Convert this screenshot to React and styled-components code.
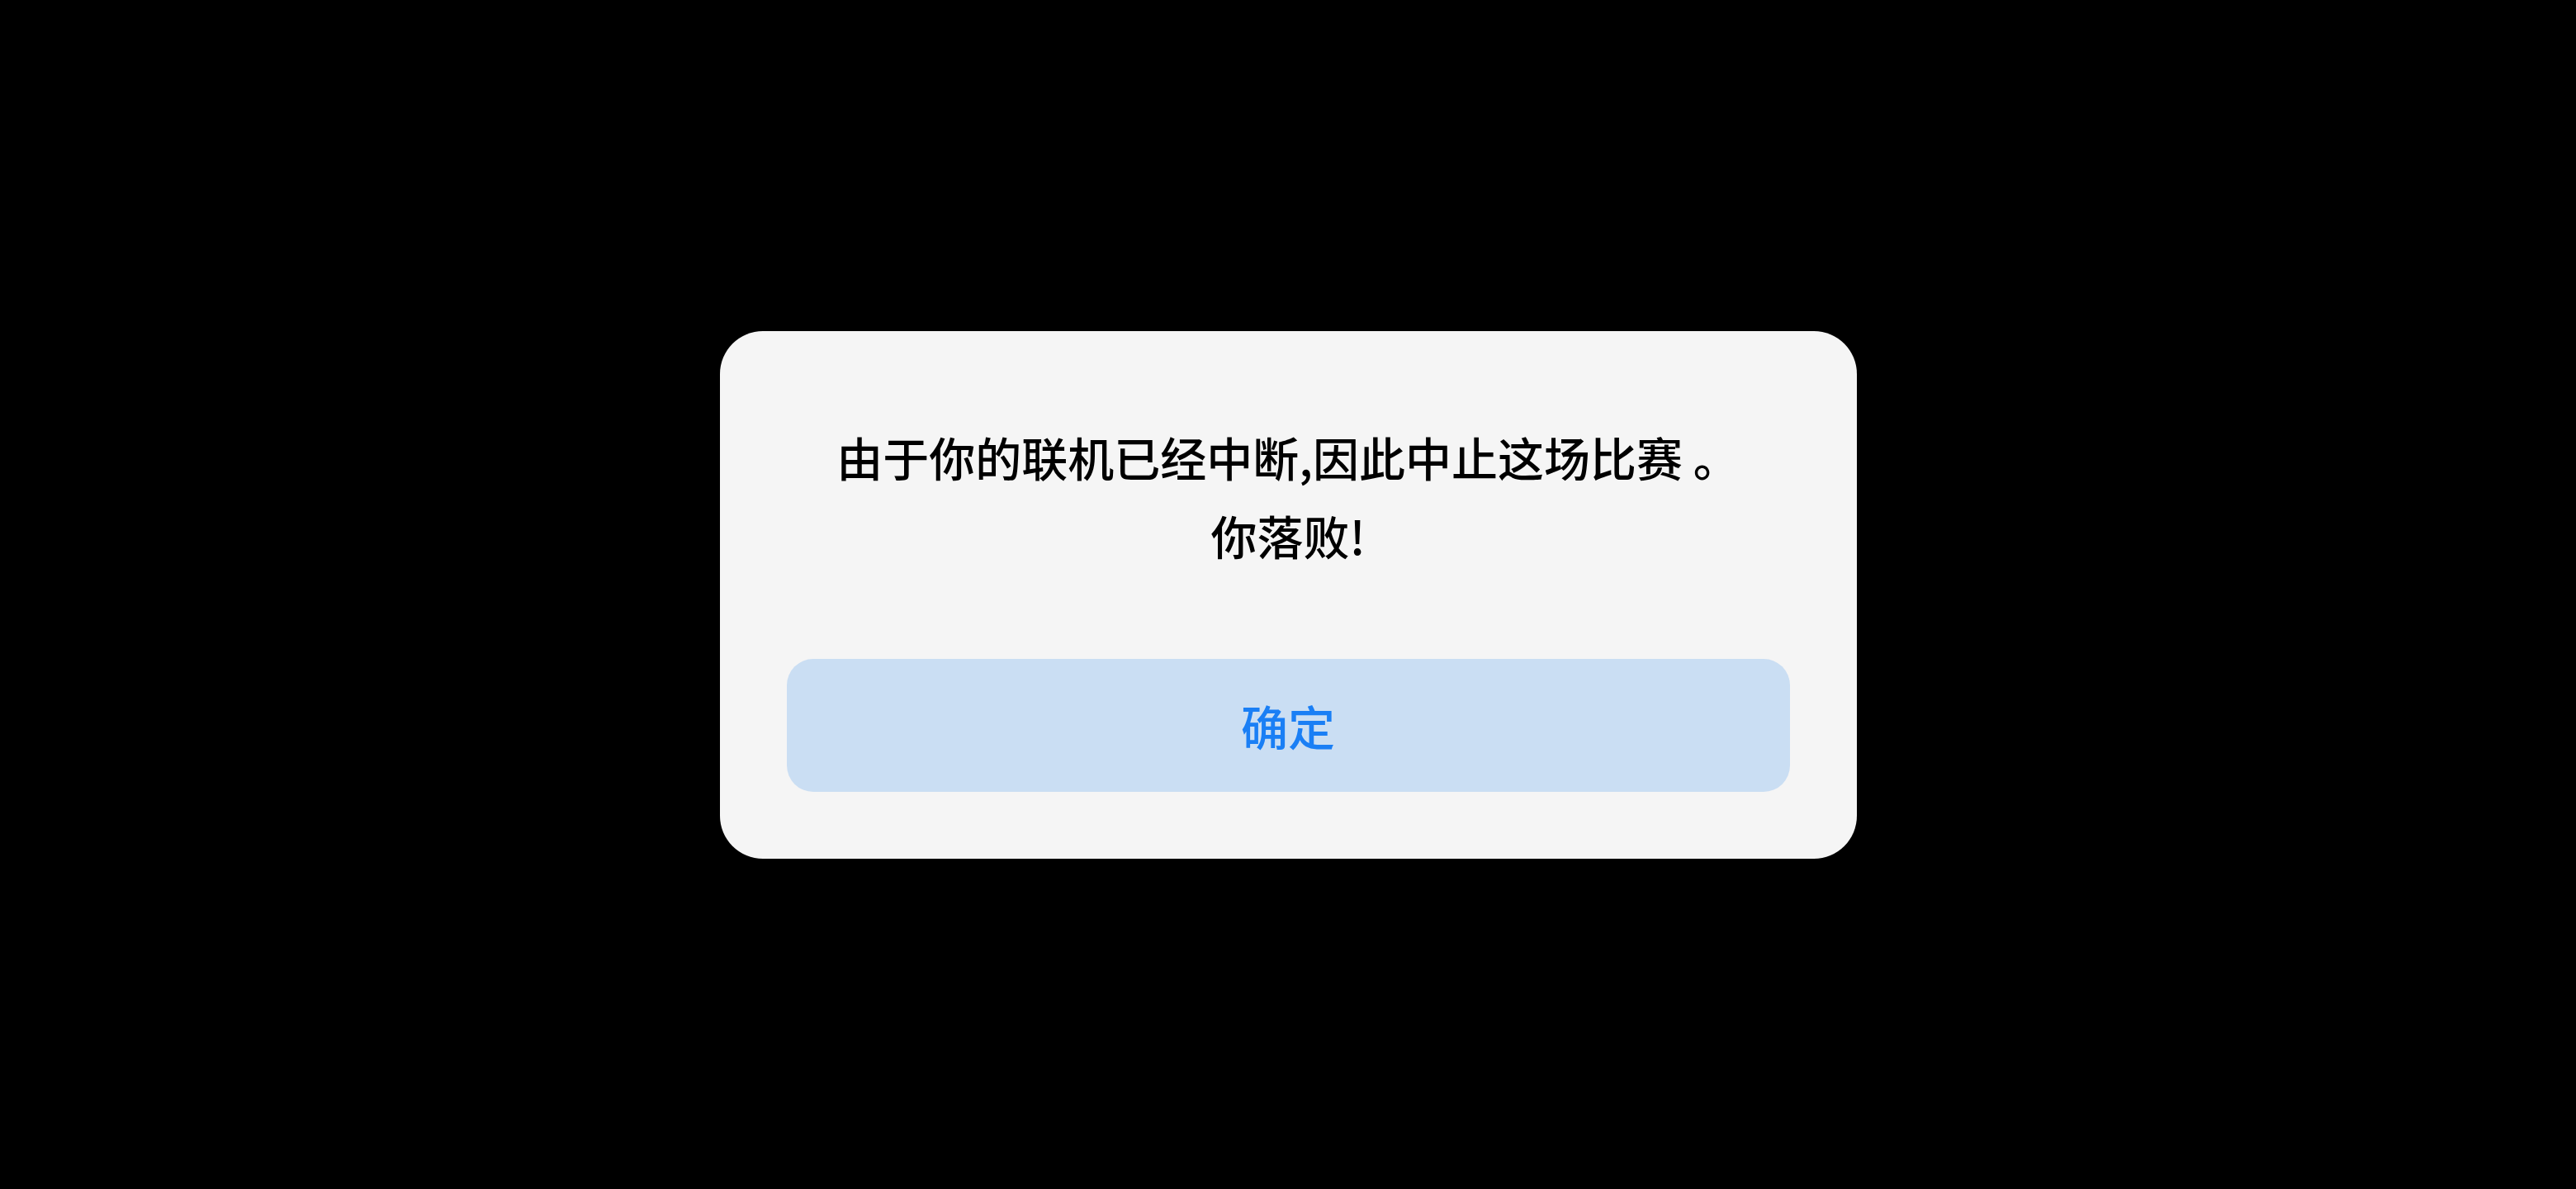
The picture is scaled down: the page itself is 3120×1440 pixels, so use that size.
import React from "react";
import styled, { createGlobalStyle } from "styled-components";

const Global = createGlobalStyle`
  html, body {
    margin: 0;
    padding: 0;
    background: #000;
  }
  #root {
    min-height: 100vh;
  }
`;

const Screen = styled.div`
  width: 100vw;
  height: 100vh;
  background: #000000;
  display: flex;
  align-items: center;
  justify-content: center;
  font-family: "Noto Sans CJK SC", "Noto Sans", sans-serif;
`;

const Dialog = styled.div`
  box-sizing: border-box;
  width: 1377px;
  background: #f5f5f5;
  border-radius: 52px;
  padding: 104px 81px 81px;
  display: flex;
  flex-direction: column;
  align-items: stretch;
`;

const Message = styled.p`
  margin: 0;
  color: #000000;
  font-size: 56px;
  line-height: 95px;
  font-weight: 500;
  text-align: center;
`;

const Button = styled.button`
  margin-top: 103px;
  height: 161px;
  border: none;
  border-radius: 32px;
  background: #cadef3;
  color: #1a7ff5;
  font-family: "Noto Sans CJK SC", "Noto Sans", sans-serif;
  font-size: 57px;
  font-weight: 500;
  cursor: pointer;
  display: flex;
  align-items: center;
  justify-content: center;
`;

export default function App() {
  return (
    <>
      <Global />
      <Screen>
        <Dialog>
          <Message>
            由于你的联机已经中断,因此中止这场比赛 。
            <br />
            你落败!
          </Message>
          <Button>确定</Button>
        </Dialog>
      </Screen>
    </>
  );
}
